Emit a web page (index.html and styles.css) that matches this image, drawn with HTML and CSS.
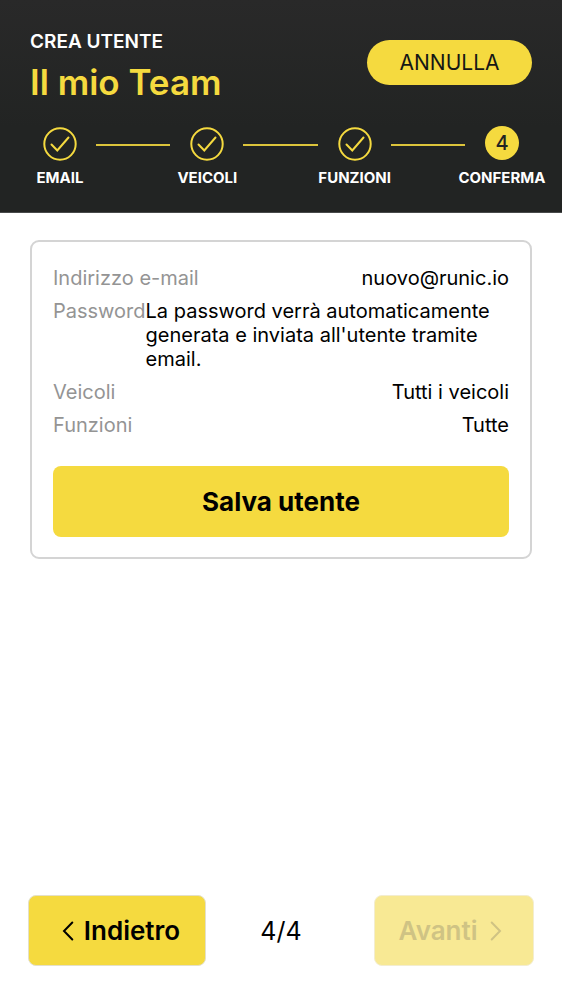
FILE: index.html
```html
<!DOCTYPE html>
<html lang="it">
<head>
<meta charset="utf-8">
<meta name="viewport" content="width=device-width, initial-scale=1">
<title>Crea utente</title>
<link rel="stylesheet" href="styles.css">
</head>
<body>
<header class="header">
  <div class="header-top">
    <div class="heading">
      <p class="eyebrow">CREA UTENTE</p>
      <h1 class="title">Il mio Team</h1>
    </div>
    <button class="cancel" type="button">ANNULLA</button>
  </div>
  <ol class="steps">
    <li class="step">
      <svg class="mark" viewBox="0 0 34 34" aria-hidden="true"><circle cx="17" cy="17" r="15.700"/><path d="M8.500 17.500l5.800 6L25.500 10.500"/></svg>
      <span class="step-label">EMAIL</span>
    </li>
    <li class="line" aria-hidden="true"></li>
    <li class="step">
      <svg class="mark" viewBox="0 0 34 34" aria-hidden="true"><circle cx="17" cy="17" r="15.700"/><path d="M8.500 17.500l5.800 6L25.500 10.500"/></svg>
      <span class="step-label">VEICOLI</span>
    </li>
    <li class="line" aria-hidden="true"></li>
    <li class="step">
      <svg class="mark" viewBox="0 0 34 34" aria-hidden="true"><circle cx="17" cy="17" r="15.700"/><path d="M8.500 17.500l5.800 6L25.500 10.500"/></svg>
      <span class="step-label">FUNZIONI</span>
    </li>
    <li class="line" aria-hidden="true"></li>
    <li class="step" aria-current="step">
      <span class="number">4</span>
      <span class="step-label">CONFERMA</span>
    </li>
  </ol>
</header>
<main class="content">
  <section class="card">
    <dl class="summary">
      <div class="row"><dt>Indirizzo e-mail</dt><dd>nuovo@runic.io</dd></div>
      <div class="row"><dt>Password</dt><dd>La password verrà automaticamente generata e inviata all'utente tramite email.</dd></div>
      <div class="row"><dt>Veicoli</dt><dd>Tutti i veicoli</dd></div>
      <div class="row"><dt>Funzioni</dt><dd>Tutte</dd></div>
    </dl>
    <button class="save" type="button">Salva utente</button>
  </section>
</main>
<footer class="footer">
  <button class="nav back" type="button">
    <svg class="chevron" viewBox="0 0 12 20" aria-hidden="true"><path d="M10.300 1.500L2 10l8.300 8.500"/></svg>
    Indietro
  </button>
  <span class="count">4/4</span>
  <button class="nav next" type="button" disabled>
    Avanti
    <svg class="chevron" viewBox="0 0 12 20" aria-hidden="true"><path d="M1.700 1.500L10 10l-8.300 8.500"/></svg>
  </button>
</footer>
</body>
</html>
```
FILE: styles.css
```css
* {
  box-sizing: border-box;
}

body {
  display: flex;
  flex-direction: column;
  min-height: 100vh;
  margin: 0;
  background: #fff;
  color: #000;
  font-family: Inter, "Liberation Sans", sans-serif;
  font-size: 20px;
  line-height: 24px;
}

button {
  border: 0;
  padding: 0;
  background: #f5da3f;
  color: #000;
  font-family: inherit;
}

.header {
  padding: 30px 0 24px;
  border-bottom: 1px solid #484a4a;
  background: linear-gradient(#292929, #222423 60%);
  color: #fff;
}

.header-top {
  display: flex;
  justify-content: space-between;
  align-items: flex-start;
  padding: 0 30px;
}

.eyebrow {
  margin: 0;
  font-size: 19px;
  font-weight: 600;
}

.title {
  margin: 8px 0 0;
  color: #f5da3f;
  font-size: 35px;
  font-weight: 600;
  line-height: 40px;
}

.cancel {
  width: 165px;
  height: 45px;
  margin-top: 10px;
  border-radius: 24px;
  color: #151715;
  font-size: 21px;
}

.steps {
  display: flex;
  margin: 24px 0 0;
  padding: 0 24px;
  list-style: none;
}

.step {
  display: flex;
  flex-direction: column;
  align-items: center;
  gap: 7px;
  width: 72px;
}

.mark {
  width: 34px;
  height: 34px;
  margin-top: 1px;
  fill: none;
  stroke: #f5da3f;
  stroke-width: 2;
  stroke-linecap: round;
}

.line {
  flex: 1;
  height: 2px;
  margin: 18px 1px 0 0;
  background: #dcc43b;
}

.number {
  width: 34px;
  height: 34px;
  margin-bottom: 1px;
  border-radius: 50%;
  background: #f5da3f;
  color: #222423;
  font-weight: 500;
  line-height: 34px;
  text-align: center;
}

.step-label {
  font-size: 15px;
  font-weight: 700;
  line-height: 20px;
  white-space: nowrap;
}

.content {
  flex: 1;
  padding: 27px 30px;
}

.card {
  padding: 24px 21px 20px;
  border: 2px solid #d4d4d4;
  border-radius: 9px;
}

.summary {
  display: grid;
  gap: 9px;
  margin: 0;
}

.row {
  display: flex;
  justify-content: space-between;
}

.row dt {
  color: #949494;
}

.row dd {
  margin: 0;
}

.save {
  width: 100%;
  height: 71px;
  margin-top: 29px;
  border-radius: 8px;
  font-size: 26px;
  font-weight: 700;
}

.footer {
  display: grid;
  grid-template-columns: 1fr auto 1fr;
  align-items: center;
  padding: 0 28px 34px;
}

.nav {
  display: flex;
  justify-content: center;
  align-items: center;
  height: 71px;
  border: 1px solid #e4e0c8;
  border-radius: 8px;
  font-size: 26px;
  font-weight: 600;
}

.back {
  gap: 10px;
  width: 178px;
  padding-left: 8px;
}

.next {
  gap: 12px;
  justify-self: end;
  width: 160px;
  padding-right: 8px;
  border-color: #f3edcf;
  background: #f8e994;
  color: #cfc384;
}

.chevron {
  width: 12px;
  height: 20px;
  fill: none;
  stroke: currentColor;
  stroke-width: 2;
  stroke-linecap: round;
}

.count {
  font-size: 25px;
}
```
